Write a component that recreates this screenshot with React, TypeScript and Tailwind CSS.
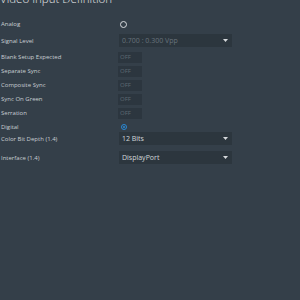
import React from "react";

const font = { fontFamily: '"Open Sans", "Noto Sans", sans-serif' };

function Label({ children }: { children: React.ReactNode }) {
  return <div className="w-[118px] pl-[1px] text-[6px] leading-none text-[#c9ced3]">{children}</div>;
}

function Off() {
  return (
    <div className="ml-0 flex h-[11px] w-[24px] items-center bg-[#2c363f] pl-[2px] text-[6px] leading-none text-[#5f6a73]">
      OFF
    </div>
  );
}

function Select({ value, disabled }: { value: string; disabled?: boolean }) {
  return (
    <div className="ml-[1px] flex h-[13px] w-[113px] items-center justify-between bg-[#2c363e] pl-[3px] pr-[4px]">
      <span className={`text-[7px] leading-none ${disabled ? "text-[#68737c]" : "text-[#d2d6da]"}`}>{value}</span>
      <svg width="5" height="3" viewBox="0 0 5 3">
        <polygon points="0,0 5,0 2.5,3" fill="#d6d9dc" />
      </svg>
    </div>
  );
}

export default function App() {
  return (
    <div className="h-[300px] w-[300px] overflow-hidden bg-[#343f49]" style={font}>
      <div className="flow-root h-[17px]">
        <div className="-mt-[7px] text-[11.5px] font-light leading-[12px] text-[#e4e6e8]">Video Input Definition</div>
      </div>
      <div className="flex h-[14px] items-center">
        <Label>Analog</Label>
        <div className="ml-[2px] h-[7px] w-[7px] rounded-full border border-[#d9dcdf]" />
      </div>
      <div className="mt-[3px] flex h-[13px] items-center">
        <Label>Signal Level</Label>
        <Select value="0.700 : 0.300 Vpp" disabled />
      </div>
      <div className="mt-[3px] flex h-[14px] items-center">
        <Label>Blank Setup Expected</Label>
        <Off />
      </div>
      <div className="flex h-[14px] items-center">
        <Label>Separate Sync</Label>
        <Off />
      </div>
      <div className="flex h-[14px] items-center">
        <Label>Composite Sync</Label>
        <Off />
      </div>
      <div className="flex h-[14px] items-center">
        <Label>Sync On Green</Label>
        <Off />
      </div>
      <div className="flex h-[14px] items-center">
        <Label>Serration</Label>
        <Off />
      </div>
      <div className="mt-[2px] flex h-[10px] items-center">
        <Label>Digital</Label>
        <div className="ml-[3px] flex h-[6px] w-[6px] items-center justify-center rounded-full border border-[#2a8ad6]">
          <div className="h-[2px] w-[2px] rounded-full bg-[#2a8ad6]" />
        </div>
      </div>
      <div className="flex h-[13px] items-center">
        <Label>Color Bit Depth (1.4)</Label>
        <Select value="12 Bits" />
      </div>
      <div className="mt-[6px] flex h-[13px] items-center">
        <Label>Interface (1.4)</Label>
        <Select value="DisplayPort" />
      </div>
    </div>
  );
}
